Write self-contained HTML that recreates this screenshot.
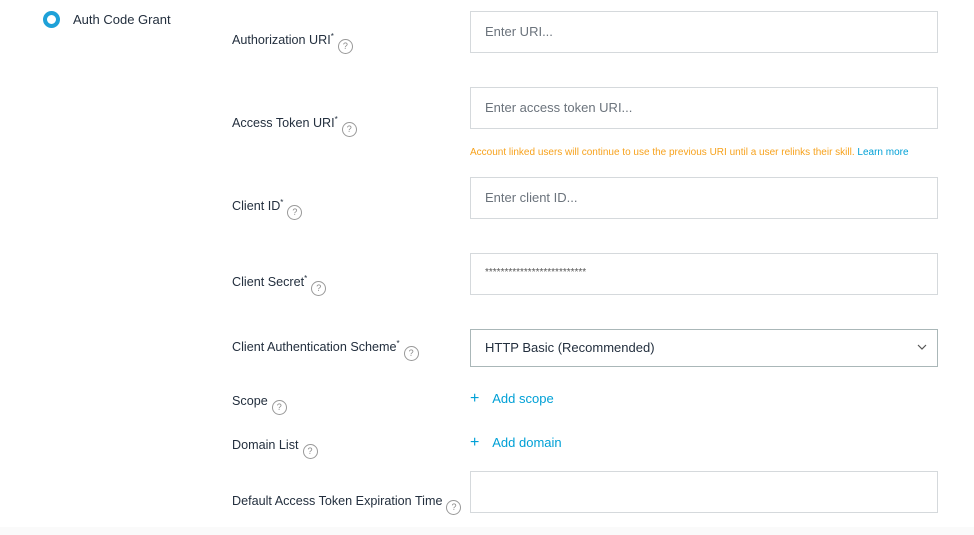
<!DOCTYPE html>
<html><head><style>
body{margin:0;width:974px;height:535px;background:#fff;position:relative;overflow:hidden;font-family:"Liberation Sans",sans-serif;}
.a{position:absolute;}
.lbl{position:absolute;left:232px;font-size:12.6px;color:#232f3e;white-space:nowrap;}
.lbl sup{font-size:8px;}
.q{display:inline-block;width:13px;height:13px;border:1px solid #999;border-radius:50%;font-size:9px;color:#888;text-align:center;line-height:13px;vertical-align:-5px;margin-left:4px;}
.in{position:absolute;left:470px;border:1px solid #d5d9dc;box-sizing:border-box;width:468px;font-size:13px;color:#6b737c;padding-left:14px;}
.link{position:absolute;left:470px;font-size:13px;color:#00a0d6;}
</style></head><body>
<div class="a" style="left:0;top:527px;width:974px;height:8px;background:#fafafa"></div>
<div class="a" style="left:43px;top:11px;width:9px;height:9px;border:4px solid #1ea1d8;border-radius:50%;background:#fff"></div>
<div class="a" style="left:73px;top:12px;font-size:13px;color:#232f3e">Auth Code Grant</div>

<div class="lbl" style="top:32px">Authorization URI<sup>*</sup><span class="q">?</span></div>
<div class="lbl" style="top:115px">Access Token URI<sup>*</sup><span class="q">?</span></div>
<div class="lbl" style="top:198px">Client ID<sup>*</sup><span class="q">?</span></div>
<div class="lbl" style="top:274px">Client Secret<sup>*</sup><span class="q">?</span></div>
<div class="lbl" style="top:339px">Client Authentication Scheme<sup>*</sup><span class="q">?</span></div>
<div class="lbl" style="top:394px">Scope<span class="q">?</span></div>
<div class="lbl" style="top:438px">Domain List<span class="q">?</span></div>
<div class="lbl" style="top:494px">Default Access Token Expiration Time<span class="q">?</span></div>

<div class="in" style="top:11px;height:42px;line-height:40px">Enter URI...</div>
<div class="in" style="top:87px;height:42px;line-height:40px">Enter access token URI...</div>
<div class="a" style="left:470px;top:147px;font-size:10px;color:#f7a21c">Account linked users will continue to use the previous URI until a user relinks their skill. <span style="color:#00a0d6">Learn more</span></div>
<div class="in" style="top:177px;height:42px;line-height:40px">Enter client ID...</div>
<div class="in" style="top:253px;height:42px;line-height:38px;font-size:10px;color:#555">**************************</div>
<div class="in" style="top:329px;height:38px;line-height:36px;border-color:#aab7b8;color:#232f3e">HTTP Basic (Recommended)
<svg class="a" style="right:10px;top:14px" width="10" height="7" viewBox="0 0 10 7"><path d="M1 1L5 5L9 1" fill="none" stroke="#555" stroke-width="1.2"/></svg></div>
<div class="link" style="top:390px"><span style="font-size:16px;margin-right:10px">+</span> Add scope</div>
<div class="link" style="top:434px"><span style="font-size:16px;margin-right:10px">+</span> Add domain</div>
<div class="in" style="top:471px;height:42px"></div>
</body></html>
